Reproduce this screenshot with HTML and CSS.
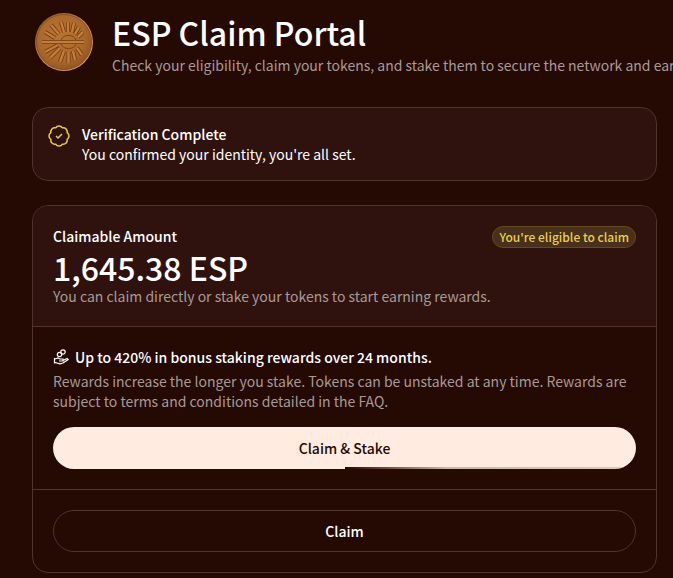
FILE: index.html
```html
<!DOCTYPE html>
<html lang="en">
<head>
  <meta charset="UTF-8">
  <meta name="viewport" content="width=device-width, initial-scale=1.0">
  <title>ESP Claim Portal</title>
  <link rel="stylesheet" href="styles.css">
</head>
<body>
  <header class="header">
    <svg class="coin" viewBox="0 0 60 60" aria-hidden="true">
      <defs>
        <radialGradient id="coin-face" cx="45%" cy="40%" r="60%">
          <stop offset="0" stop-color="#b87432"/>
          <stop offset="0.7" stop-color="#ab682b"/>
          <stop offset="1" stop-color="#955824"/>
        </radialGradient>
        <linearGradient id="coin-rim" x1="0" y1="0" x2="1" y2="1">
          <stop offset="0" stop-color="#8a4f20"/>
          <stop offset="0.5" stop-color="#c98a4a"/>
          <stop offset="1" stop-color="#e0a565"/>
        </linearGradient>
        <g id="rays">
          <path d="M11 20 21 26M17 13 25 22M27 10 30 20M34 10V20M40 11 38 20M45 15 41 22M49 20 44 25"/>
          <path d="M11 40 24 33M16 46 26 36M26 50 30 39M34.500 51V40M41 48 39 39M48 43 43 36"/>
          <path d="M8 30H50"/>
        </g>
      </defs>
      <circle cx="30" cy="30" r="29" fill="url(#coin-rim)"/>
      <circle cx="30" cy="30" r="27.500" fill="url(#coin-face)" stroke="#8a4f20"/>
      <path d="M27 28a8 7 0 0 1 15 0M27 32a8 7 0 0 0 15 0" fill="none" stroke="#7d4318"/>
      <use href="#rays" stroke="#6d3811" stroke-width="4"/>
      <use href="#rays" stroke="#c27d3b" stroke-width="2.500"/>
    </svg>
    <div class="header-text">
      <h1>ESP Claim Portal</h1>
      <p class="muted">Check your eligibility, claim your tokens, and stake them to secure the network and earn rewards.</p>
    </div>
  </header>

  <main class="content">
    <section class="notice">
      <svg class="badge-icon" viewBox="1 1 22 22" aria-hidden="true">
        <path d="M3.850 8.620a4 4 0 0 1 4.780-4.770 4 4 0 0 1 6.740 0 4 4 0 0 1 4.780 4.780 4 4 0 0 1 0 6.740 4 4 0 0 1-4.770 4.780 4 4 0 0 1-6.750 0 4 4 0 0 1-4.780-4.770 4 4 0 0 1 0-6.760Z"/>
        <path d="M9 12l2 2 4-4"/>
      </svg>
      <div>
        <h2>Verification Complete</h2>
        <p>You confirmed your identity, you're all set.</p>
      </div>
    </section>

    <section class="card">
      <div class="amount-box">
        <div class="amount-top">
          <h2>Claimable Amount</h2>
          <span class="tag">You're eligible to claim</span>
        </div>
        <div class="amount">1,645.38 ESP</div>
        <p class="muted">You can claim directly or stake your tokens to start earning rewards.</p>
      </div>
      <div class="stake-box">
        <h2 class="bonus">
          <svg class="hand-icon" viewBox="0 0 16 16" aria-hidden="true">
            <circle cx="10" cy="3" r="2.200"/>
            <circle cx="6.500" cy="5.500" r="2.200"/>
            <path d="M1.500 9v5.500M2 10l3-1 2 1h3v2H6M10 11.500l4-2 1.200 1L10 14l-3 .8L2 13.500"/>
          </svg>
          Up to 420% in bonus staking rewards over 24 months.
        </h2>
        <p class="muted">Rewards increase the longer you stake. Tokens can be unstaked at any time. Rewards are subject to terms and conditions detailed in the FAQ.</p>
        <button class="btn btn-stake" type="button">Claim &amp; Stake</button>
      </div>
      <div class="claim-box">
        <button class="btn btn-claim" type="button">Claim</button>
      </div>
    </section>
  </main>
</body>
</html>
```

FILE: styles.css
```css
* {
  box-sizing: border-box;
}
body {
  margin: 0;
  background-color: #250903;
  color: white;
  font-family: "Noto Sans CJK JP", "Noto Sans CJK SC", sans-serif;
  font-size: 14px;
  line-height: 20px;
  overflow-x: hidden;
}
h1, h2, p {
  margin: 0;
}
h1 {
  font-size: 32px;
  line-height: 46px;
  font-weight: 500;
}
h2 {
  font-size: 14px;
  line-height: 20px;
  font-weight: 500;
}
.muted {
  color: #a89a96;
}
.header {
  display: flex;
  align-items: flex-start;
  gap: 18px;
  padding: 9px 0 0 34px;
}
.header .muted {
  white-space: nowrap;
}
.coin {
  width: 60px;
  height: 60px;
  margin-top: 3px;
  flex-shrink: 0;
}
.content {
  display: flex;
  flex-direction: column;
  gap: 24px;
  padding: 32px 16px 4px 32px;
}
.notice {
  display: flex;
  gap: 12px;
  padding: 16px 15px;
  border: 1px solid #50332d;
  border-radius: 16px;
  background-color: #2f120d;
}
.badge-icon {
  width: 22px;
  height: 22px;
  margin-top: 1px;
  fill: none;
  stroke: #e5cc51;
  stroke-width: 1.5;
  stroke-linejoin: round;
}
.card {
  border: 1px solid #50332d;
  border-radius: 16px;
  overflow: hidden;
}
.amount-box {
  padding: 20px;
  background-color: #2f120d;
  border-bottom: 1px solid #50332d;
}
.amount-top {
  display: flex;
  justify-content: space-between;
  align-items: flex-start;
}
.tag {
  padding: 0 6px;
  border: 1px solid #66491e;
  border-radius: 11px;
  background-color: #48301a;
  color: #e9cf4f;
  font-size: 12px;
  font-weight: 500;
}
.amount {
  font-size: 32px;
  line-height: 38px;
  font-weight: 500;
}
.stake-box {
  padding: 20px;
  border-bottom: 1px solid #50332d;
}
.bonus {
  display: flex;
  align-items: center;
  gap: 6px;
  margin-bottom: 4px;
}
.hand-icon {
  width: 16px;
  height: 16px;
  fill: none;
  stroke: #fff;
  stroke-width: 1.2;
}
.btn {
  display: block;
  width: 100%;
  height: 42px;
  border: 1px solid #50332d;
  border-radius: 21px;
  background: none;
  color: white;
  font: inherit;
  font-weight: 500;
  cursor: pointer;
}
.btn-stake {
  margin-top: 16px;
  border: none;
  background: linear-gradient(to right, #250903, #c9b5a9 35%, #dccabf) right bottom / 50% 2px no-repeat #ffebdf;
  color: #250903;
}
.claim-box {
  padding: 20px;
}
```
